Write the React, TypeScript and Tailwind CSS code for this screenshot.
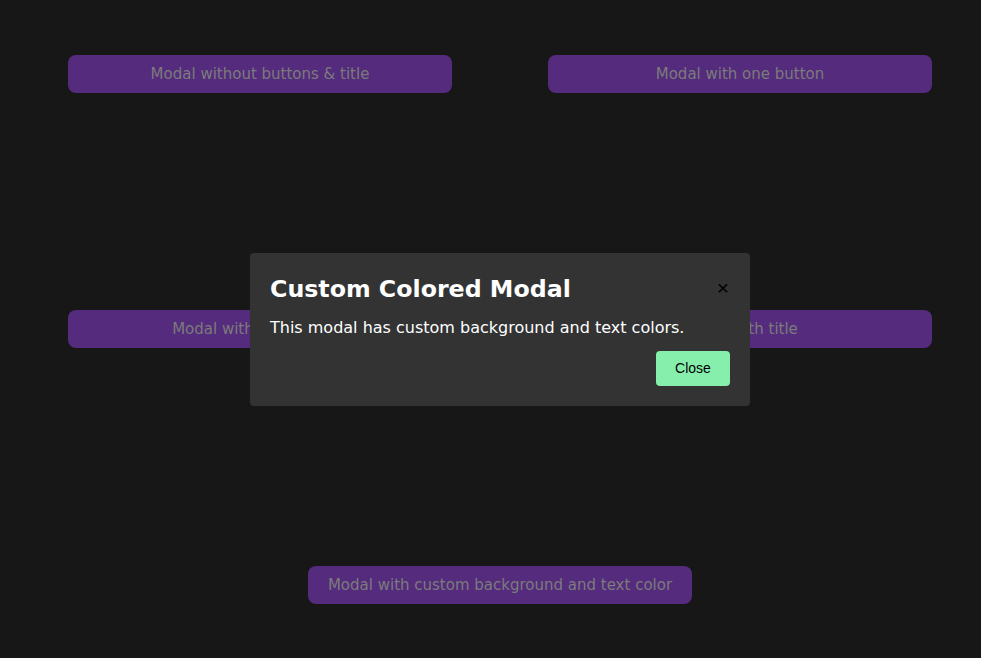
export default function App() {
  const buttons = [
    "Modal without buttons & title",
    "Modal with one button",
    "Modal with two buttons",
    "Modal with title",
  ];

  return (
    <div className="relative min-h-[658px] w-full overflow-hidden bg-[#171717] font-['DejaVu_Sans',sans-serif]">
      {/* ── Demo buttons ─────────────────────────────── */}
      <div className="grid w-[1000px] grid-cols-[480px_480px] gap-y-[217px] px-5 pt-[55px]">
        {buttons.map((label) => (
          <button
            key={label}
            className="mx-auto h-[38px] w-[384px] rounded-lg bg-[#552b7d] pt-[1px] text-[15px] text-[#7b7b7b]"
          >
            {label}
          </button>
        ))}
        <button className="col-span-2 mx-auto mt-[1px] h-[38px] w-[384px] rounded-lg bg-[#552b7d] pt-[1px] text-[15px] text-[#7b7b7b]">
          Modal with custom background and text color
        </button>
      </div>

      {/* ── Open modal ───────────────────────────────── */}
      <div className="absolute left-[250px] top-[253px] w-[500px] rounded bg-[#333333] px-5 pb-5 pt-[22px] text-white">
        <div className="flex items-start justify-between">
          <h2 className="text-[23.7px] font-bold leading-[28px]">Custom Colored Modal</h2>
          <button className="mr-[1px] mt-[2px] text-[21px] leading-none text-black font-['Liberation_Sans',sans-serif]">
            ×
          </button>
        </div>
        <p className="mt-[15px] text-[16px] leading-[20px]">
          This modal has custom background and text colors.
        </p>
        <div className="mt-[13px] flex justify-end">
          <button className="h-[35px] w-[74px] rounded bg-[#86efac] text-[14px] text-black font-['Liberation_Sans',sans-serif]">
            Close
          </button>
        </div>
      </div>
    </div>
  );
}
